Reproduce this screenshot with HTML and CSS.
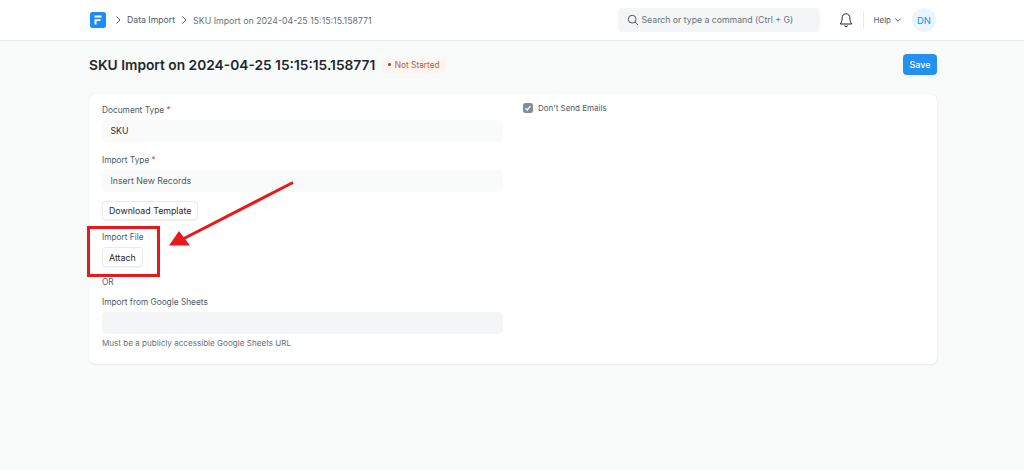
FILE: index.html
```html
<!DOCTYPE html>
<html lang="en">
<head>
<meta charset="utf-8">
<title>SKU Import</title>
<link rel="stylesheet" href="styles.css">
</head>
<body>
<header class="navbar">
  <div class="nav-inner">
    <svg class="logo" width="16" height="16" viewBox="0 0 16 16"><rect width="16" height="16" rx="2.5" fill="#1c8cfb"/><path d="M4.5 3.6h7v2h-7zM4.5 7.2h6v1.9h-4v3.4h-2z" fill="#fff"/></svg>
    <svg class="crumb-sep" width="8" height="10" viewBox="0 0 8 10"><path d="M2.5 1.5 6 5 2.5 8.500" fill="none" stroke="#4c5a67" stroke-width="1"/></svg>
    <span class="crumb">Data Import</span>
    <svg class="crumb-sep" width="8" height="10" viewBox="0 0 8 10"><path d="M2.500 1.500 6 5 2.500 8.500" fill="none" stroke="#4c5a67" stroke-width="1"/></svg>
    <span class="crumb crumb-last">SKU Import on 2024-04-25 15:15:15.158771</span>
    <div class="search">
      <svg width="12" height="12" viewBox="0 0 12 12"><circle cx="5.200" cy="5.200" r="3.900" fill="none" stroke="#4c5a67" stroke-width="1"/><path d="M8 8l3 3" stroke="#4c5a67" stroke-width="1"/></svg>
      <span>Search or type a command (Ctrl + G)</span>
    </div>
    <svg class="bell" width="14" height="16" viewBox="0 0 14 16"><path d="M7 1.800c-2.500 0-3.900 1.900-3.900 4.200 0 3-.7 4.600-1.800 6h11.400c-1.100-1.400-1.800-3-1.800-6 0-2.300-1.400-4.200-3.900-4.200z" fill="none" stroke="#1f272e" stroke-width="1"/><path d="M5.300 13.800c.5 1 2.900 1 3.400 0" fill="none" stroke="#1f272e" stroke-width="1"/></svg>
    <div class="nav-divider"></div>
    <span class="help">Help</span>
    <svg class="help-caret" width="8" height="6" viewBox="0 0 8 6"><path d="M1.200 1.500 4 4.300l2.800-2.800" fill="none" stroke="#4c5a67" stroke-width="1"/></svg>
    <div class="avatar">DN</div>
  </div>
</header>
<main class="page">
  <div class="page-head">
    <h1 class="title">SKU Import on 2024-04-25 15:15:15.158771</h1>
    <span class="pill"><i class="dot"></i>Not Started</span>
    <button class="btn-primary">Save</button>
  </div>
  <section class="card">
    <div class="col">
      <div class="field">
        <label class="label">Document Type <em>*</em></label>
        <div class="input input-dark">SKU</div>
      </div>
      <div class="field">
        <label class="label">Import Type <em>*</em></label>
        <div class="input">Insert New Records</div>
      </div>
      <button class="btn btn-download">Download Template</button>
      <div class="field-file">
        <label class="label">Import File</label>
        <button class="btn">Attach</button>
      </div>
      <div class="or">OR</div>
      <label class="label">Import from Google Sheets</label>
      <div class="input input-grey"></div>
      <p class="help-text">Must be a publicly accessible Google Sheets URL</p>
    </div>
    <div class="col col-right">
      <div class="check-row">
        <span class="check"><svg width="10" height="10" viewBox="0 0 10 10"><path d="M2.500 5.200 4.300 7l3.200-3.800" fill="none" stroke="#fff" stroke-width="1.300"/></svg></span>
        <span class="check-label">Don't Send Emails</span>
      </div>
    </div>
  </section>
</main>
<div class="mark-box"></div>
<svg class="mark-arrow" width="134" height="72" viewBox="0 0 134 72"><path d="M124 1.500 14 58" stroke="#e8191c" stroke-width="3" fill="none"/><path d="M0 64.500 21 64.500 10 50z" fill="#e8191c"/></svg>
</body>
</html>
```
FILE: styles.css
```css
* { box-sizing: border-box; }
html, body { margin: 0; padding: 0; }
body {
  height: 470px;
  overflow: hidden;
  background: #f9fafa;
  font-family: Inter, "Liberation Sans", sans-serif;
  font-size: 9px;
  color: #4c5a67;
  position: relative;
}
.navbar {
  height: 41px;
  background: #fff;
  border-bottom: 1px solid #e6e9ea;
}
.nav-inner {
  height: 40px;
  padding: 0 88px 0 90px;
  display: flex;
  align-items: center;
}
.crumb-sep { margin-left: 5px; }
.logo + .crumb-sep { margin-left: 8px; }
.crumb { font-size: 8.700px; margin-left: 5px; color: #4c5a67; white-space: nowrap; }
.crumb-last { font-size: 8.800px; color: #687178; }
.search {
  margin-left: auto;
  width: 202px;
  height: 24px;
  background: #f4f5f6;
  border-radius: 4px;
  display: flex;
  align-items: center;
  gap: 3px;
  padding-left: 9px;
  font-size: 8.700px;
  color: #687178;
}
.bell { margin-left: 19px; }
.nav-divider { width: 1px; height: 16px; background: #e6e9ea; margin-left: 10px; }
.help { font-size: 8px; margin-left: 10px; color: #4c5a67; }
.help-caret { margin-left: 3px; }
.avatar {
  width: 24px;
  height: 24px;
  border-radius: 50%;
  background: #eaf5fe;
  color: #2490ef;
  font-size: 9.500px;
  display: flex;
  align-items: center;
  justify-content: center;
  margin-left: 10px;
}
.page { padding: 0 87px 0 89px; }
.page-head {
  height: 47px;
  margin-bottom: 6px;
  display: flex;
  align-items: center;
}
.title {
  margin: 0;
  font-size: 13.750px;
  font-weight: 600;
  color: #1f272e;
  white-space: nowrap;
}
.pill {
  margin-left: 6px;
  height: 16px;
  padding: 0 7px;
  background: #fff4f0;
  color: #b5613f;
  border-radius: 5px;
  font-size: 8.300px;
  display: flex;
  align-items: center;
  gap: 4px;
}
.dot { width: 2.500px; height: 2.500px; border-radius: 50%; background: #b5492a; }
.btn-primary {
  margin-left: auto;
  width: 34px;
  height: 21px;
  border: 0;
  border-radius: 4px;
  background: #2490ef;
  color: #fff;
  font: 500 9px Inter, "Liberation Sans", sans-serif;
  padding: 0;
}
.card {
  height: 270px;
  background: #fff;
  border-radius: 6px;
  box-shadow: 0 0 1px rgba(0,0,0,.14), 0 1px 2px rgba(0,0,0,.05);
  padding: 10px 13px;
  display: flex;
  gap: 20px;
}
.col { width: 401px; display: flex; flex-direction: column; align-items: flex-start; }
.label { font-size: 8.300px; line-height: 10px; color: #4c5a67; height: 10px; }
.label em { color: #e24c4c; font-style: normal; }
.field { width: 100%; height: 50px; }
.input {
  width: 100%;
  height: 22px;
  margin-top: 5px;
  background: #f9fafa;
  border-radius: 5px;
  padding: 0 8.500px;
  display: flex;
  align-items: center;
  font-size: 8.700px;
  color: #4c5a67;
}
.input-dark { color: #1f272e; }
.input-grey { background: #f4f5f6; }
.btn {
  height: 20px;
  padding: 0 7px;
  background: #fff;
  border: 0;
  border-radius: 4px;
  box-shadow: inset 0 0 0 1px #e9ebed, 0 1px 1px rgba(0,0,0,.05);
  font: 8.800px Inter, "Liberation Sans", sans-serif;
  color: #1f272e;
}
.btn-download { margin-top: -3px; height: 19px; }
.field-file { margin-top: 12px; display: flex; flex-direction: column; align-items: flex-start; gap: 5px; }
.or { font-size: 8.300px; line-height: 10px; margin-top: 10px; margin-bottom: 10px; }
.help-text { margin: 4px 0 0; font-size: 8.100px; line-height: 10px; color: #687178; }
.check-row { display: flex; align-items: center; gap: 5px; height: 10px; margin-top: -1px; }
.check {
  width: 10px;
  height: 10px;
  border-radius: 2.500px;
  background: #7f8c9a;
  display: flex;
  align-items: center;
  justify-content: center;
}
.check-label { font-size: 8px; color: #4c5a67; }
.mark-box {
  position: absolute;
  left: 87px;
  top: 226px;
  width: 73px;
  height: 51px;
  border: 3px solid #e8191c;
}
.mark-arrow { position: absolute; left: 169px; top: 181px; }
```
